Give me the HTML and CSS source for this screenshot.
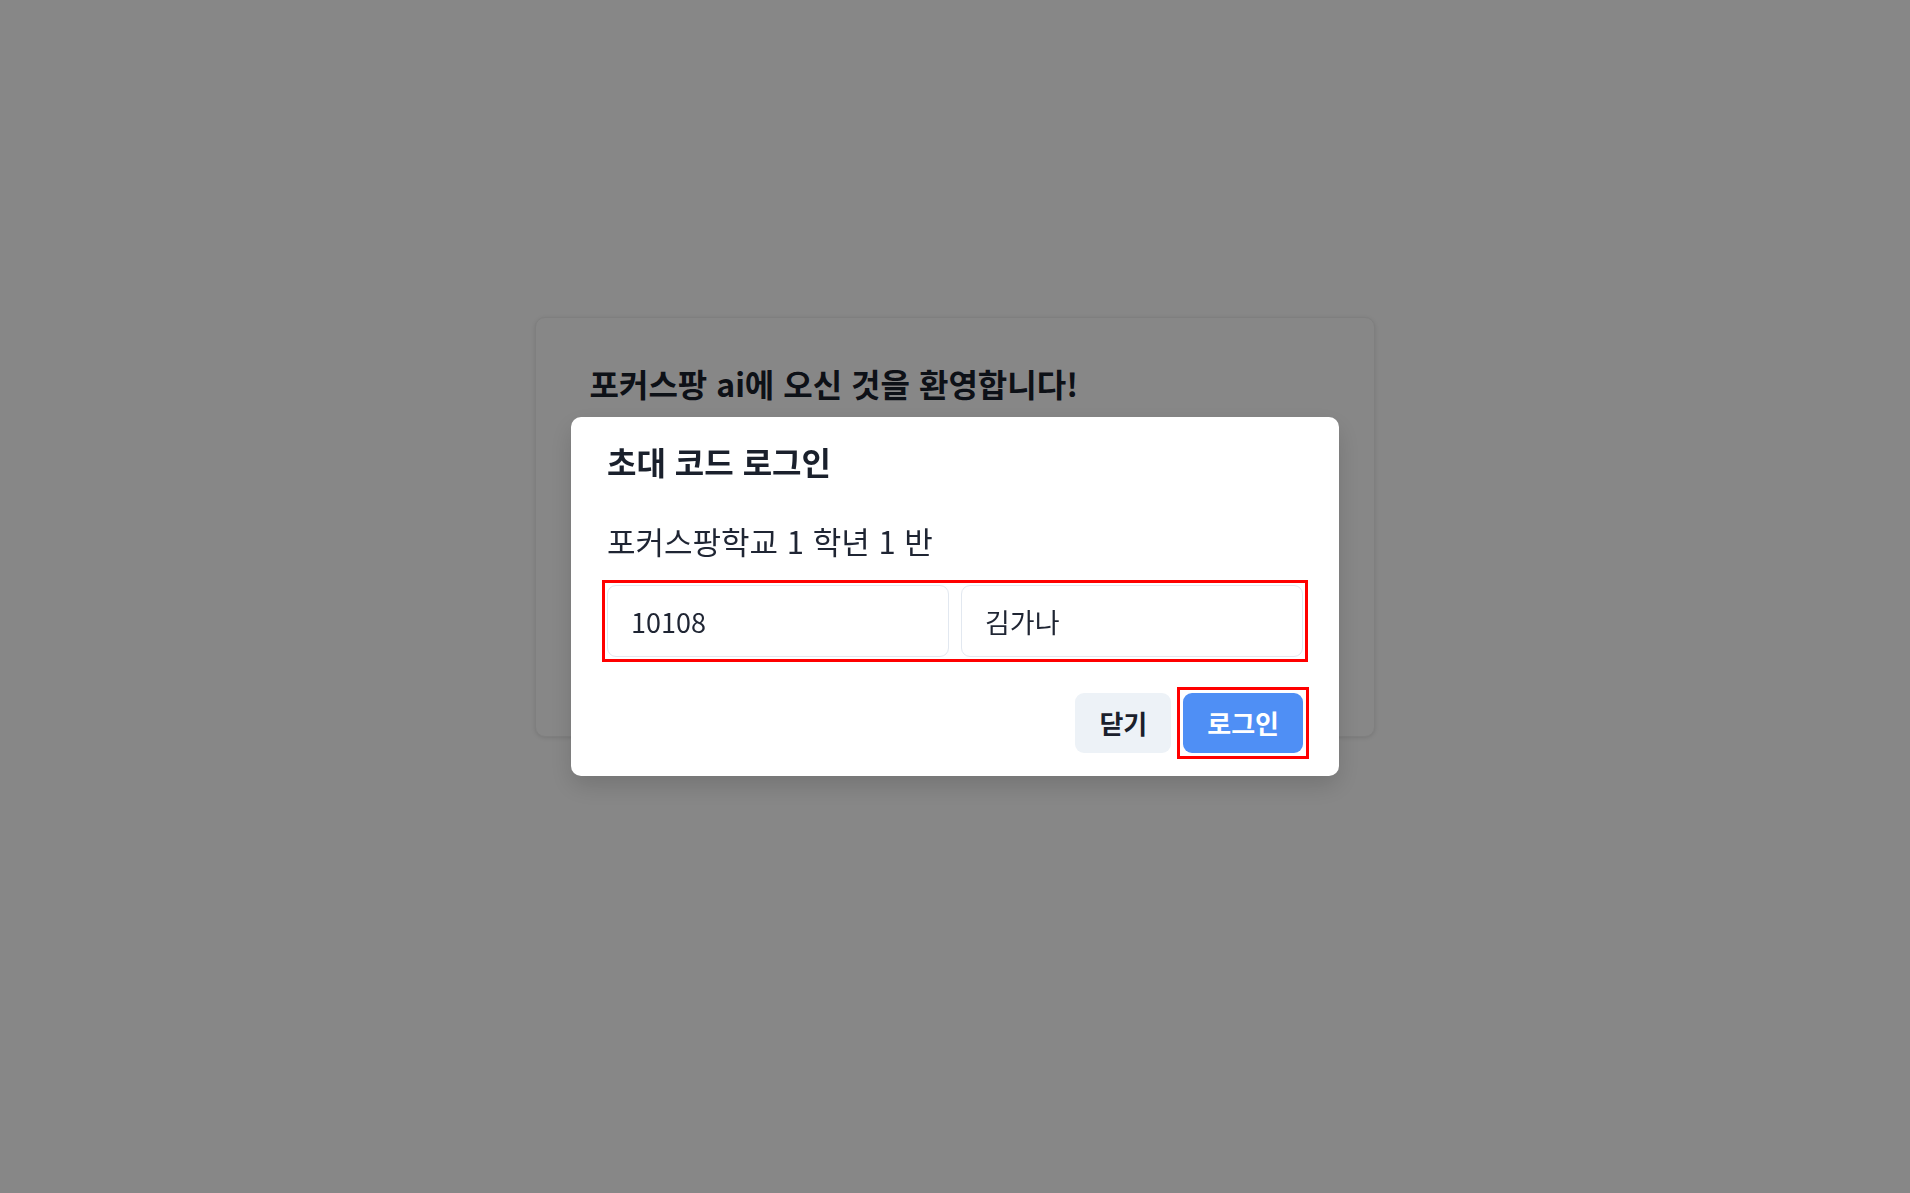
FILE: index.html
```html
<!DOCTYPE html>
<html lang="ko">
<head>
<meta charset="utf-8">
<title>포커스팡 ai</title>
<link rel="stylesheet" href="styles.css">
</head>
<body>
<main class="page">
  <section class="card">
    <h1 class="card-title">포커스팡 ai에 오신 것을 환영합니다!</h1>
  </section>
</main>
<div class="overlay">
  <div class="modal">
    <h2 class="modal-title">초대 코드 로그인</h2>
    <p class="modal-sub">포커스팡학교 1 학년 1 반</p>
    <div class="fields">
      <input class="field" type="text" value="10108">
      <input class="field" type="text" value="김가나">
    </div>
    <div class="actions">
      <button class="btn btn-close" type="button">닫기</button>
      <span class="highlight"><button class="btn btn-login" type="button">로그인</button></span>
    </div>
  </div>
</div>
</body>
</html>
```

FILE: styles.css
```css
* { box-sizing: border-box; }

html, body {
  margin: 0;
  padding: 0;
  height: 100%;
}

body {
  background: #ffffff;
  font-family: "Noto Sans CJK KR", "Noto Sans", sans-serif;
  color: #1a202c;
}

.page {
  display: flex;
  justify-content: center;
  padding-top: 317px;
}

.card {
  width: 840px;
  height: 420px;
  margin-left: -1px;
  background: #ffffff;
  border: 1px solid #f0f0f0;
  border-radius: 10px;
  box-shadow: 0 1px 4px rgba(0, 0, 0, 0.12);
  padding: 44px 54px;
}

.card-title {
  margin: 0;
  font-size: 32px;
  line-height: 42px;
  font-weight: 700;
  color: #1a202c;
}

.overlay {
  position: fixed;
  inset: 0;
  background: rgba(0, 0, 0, 0.47);
  display: flex;
  align-items: center;
  justify-content: center;
}

.modal {
  width: 768px;
  background: #ffffff;
  border-radius: 10px;
  box-shadow: 0 10px 25px rgba(0, 0, 0, 0.15);
  padding: 23px 36px 23px;
  display: flex;
  flex-direction: column;
}

.modal-title {
  margin: 0;
  font-size: 32px;
  line-height: 42px;
  font-weight: 700;
  color: #1a202c;
}

.modal-sub {
  margin: 38px 0 0;
  font-size: 31px;
  line-height: 42px;
  font-weight: 400;
  color: #1f2533;
}

.fields {
  margin-top: 23px;
  display: grid;
  grid-template-columns: 1fr 1fr;
  gap: 12px;
  outline: 3px solid #ff0000;
  outline-offset: 2px;
}

.field {
  height: 72px;
  width: 100%;
  border: 1px solid #e2e8f0;
  border-radius: 9px;
  padding: 0 23px;
  font-family: "Noto Sans CJK KR", "Noto Sans", sans-serif;
  font-size: 27px;
  color: #1f2533;
  background: #ffffff;
}

.actions {
  margin-top: 36px;
  display: flex;
  justify-content: flex-end;
  align-items: center;
  gap: 12px;
}

.highlight {
  display: flex;
  outline: 3px solid #ff0000;
  outline-offset: 3px;
}

.btn {
  height: 60px;
  padding: 0 24px 2px;
  border: none;
  border-radius: 9px;
  font-family: "Noto Sans CJK KR", "Noto Sans", sans-serif;
  font-size: 26px;
  font-weight: 700;
  cursor: pointer;
}

.btn-close {
  background: #edf2f7;
  color: #1a202c;
}

.btn-login {
  background: #4f8ff5;
  color: #ffffff;
}
```
